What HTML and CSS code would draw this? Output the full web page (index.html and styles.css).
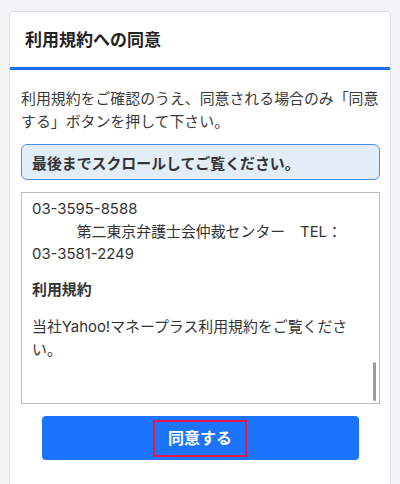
FILE: index.html
```html
<!DOCTYPE html>
<html lang="ja">
<head>
<meta charset="utf-8">
<link rel="stylesheet" href="styles.css">
</head>
<body>
<div class="card">
  <div class="card-header">
    <h1 class="title">利用規約への同意</h1>
  </div>
  <div class="card-body">
    <p class="lead">利用規約をご確認のうえ、同意される場合のみ「同意<br>する」ボタンを押して下さい。</p>
    <div class="notice">最後までスクロールしてご覧ください。</div>
    <div class="terms">
      <div class="terms-inner">
        <p class="terms-p">03-3595-8588<br><span class="indent">　　　</span>第二東京弁護士会仲裁センター　TEL：<br>03-3581-2249</p>
        <h2 class="terms-h">利用規約</h2>
        <p class="terms-p">当社Yahoo!マネープラス利用規約をご覧くださ<br>い。</p>
      </div>
      <div class="thumb"></div>
    </div>
    <div class="actions">
      <button class="agree" type="button"><span class="agree-label">同意する</span></button>
    </div>
  </div>
</div>
</body>
</html>
```
FILE: styles.css
```css
html, body {
  margin: 0;
  padding: 0;
}
body {
  background: #f2f3f5;
  font-family: "Inter", "Noto Sans CJK JP", "Noto Sans", sans-serif;
  color: #333;
  width: 400px;
  height: 484px;
  overflow: hidden;
}
.card {
  margin: 11px 0 0 9px;
  width: 380px;
  height: 520px;
  background: #fff;
  border: 1px solid #d9dde3;
  border-radius: 5px;
}
.card-header {
  height: 55px;
  display: flex;
  align-items: center;
  padding-left: 15px;
  border-bottom: 3px solid #1a6ff5;
}
.title {
  margin: 0;
  font-size: 17px;
  font-weight: 700;
  color: #222;
  line-height: 24px;
}
.card-body {
  padding: 18px 10px 0 11px;
}
.lead {
  margin: 0;
  font-size: 14.9px;
  line-height: 23px;
  color: #3a3a3a;
  white-space: nowrap;
}
.notice {
  margin-top: 10px;
  height: 34px;
  box-sizing: content-box;
  border: 1.5px solid #4b8ef2;
  border-radius: 6px;
  background: #e2edf8;
  display: flex;
  align-items: center;
  padding-left: 10px;
  font-size: 14.9px;
  font-weight: 700;
  color: #333;
}
.terms {
  position: relative;
  margin-top: 12px;
  height: 210px;
  border: 1px solid #bcbcbc;
  overflow: hidden;
}
.terms-inner {
  padding: 5px 10px 0 10px;
  color: #333;
  font-size: 14.9px;
  line-height: 22.5px;
  white-space: nowrap;
}
.terms-p {
  margin: 0;
}
.terms-h {
  margin: 13.5px 0 14.5px;
  font-size: 14.9px;
  font-weight: 700;
  line-height: 22.5px;
}
.thumb {
  position: absolute;
  right: 3px;
  top: 169px;
  width: 3px;
  height: 39px;
  border-radius: 2px;
  background: #9c9c9c;
}
.actions {
  margin-top: 12px;
  display: flex;
  justify-content: center;
  padding-right: 1px;
}
.agree {
  width: 317px;
  height: 44px;
  border: none;
  border-radius: 4px;
  background: #1c74fd;
  display: flex;
  align-items: center;
  justify-content: center;
  padding: 0;
  font-family: inherit;
  cursor: pointer;
}
.agree-label {
  display: block;
  box-sizing: border-box;
  width: 94px;
  height: 37px;
  border: 2px solid #e5164b;
  color: #fff;
  font-size: 16px;
  font-weight: 700;
  line-height: 33px;
  text-align: center;
}
```
